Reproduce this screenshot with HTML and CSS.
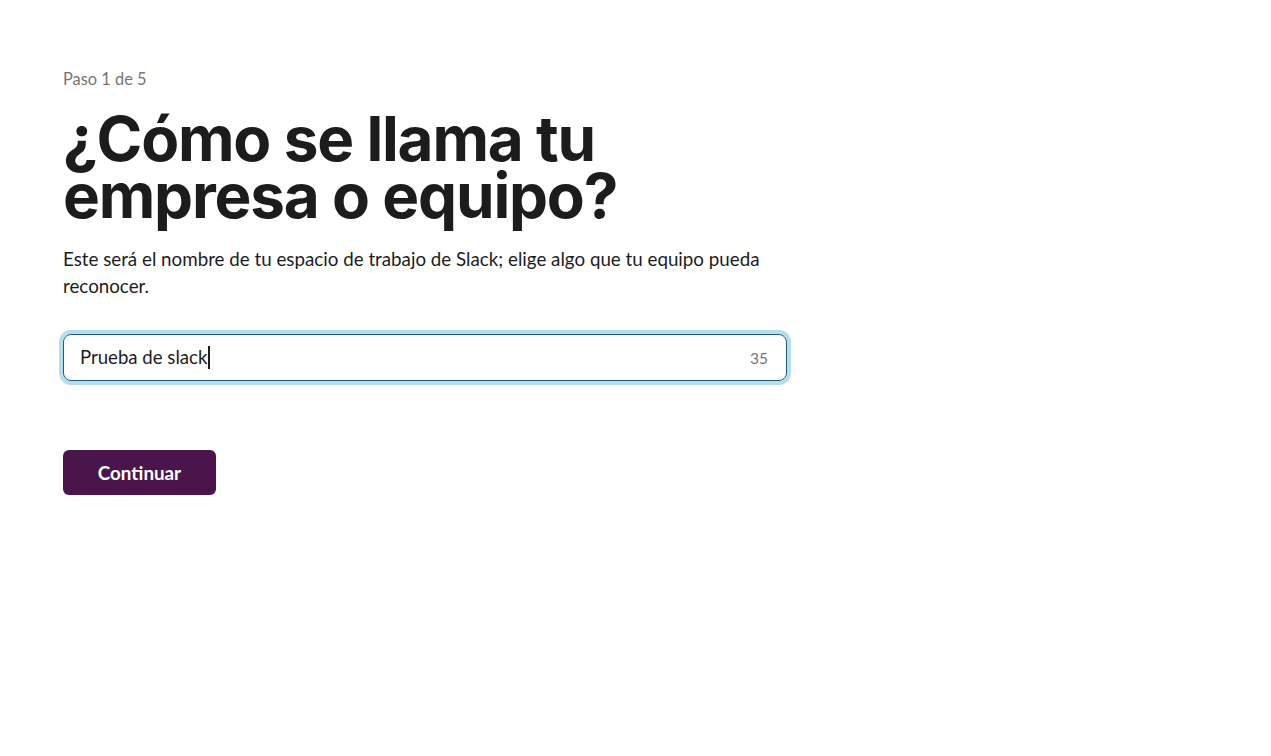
FILE: index.html
```html
<!DOCTYPE html>
<html lang="es">
<head>
<meta charset="utf-8">
<title>Slack</title>
<link rel="stylesheet" href="styles.css">
</head>
<body>
<main class="page">
  <div class="step">Paso 1 de 5</div>
  <h1 class="title">¿Cómo se llama tu empresa o equipo?</h1>
  <p class="desc">Este será el nombre de tu espacio de trabajo de Slack; elige algo que tu equipo pueda reconocer.</p>
  <div class="field">
    <span class="value">Prueba de slack</span><span class="caret"></span>
    <span class="count">35</span>
  </div>
  <button class="btn">Continuar</button>
</main>
</body>
</html>
```

FILE: styles.css
```css
* { box-sizing: border-box; }
body {
  margin: 0;
  background: #fff;
  font-family: Lato, "Noto Sans", sans-serif;
  color: #1d1c1d;
}
.page {
  padding: 68px 0 0 63px;
  width: 790px;
  display: flex;
  flex-direction: column;
  align-items: flex-start;
}
.step {
  font-size: 16.4px;
  line-height: 22px;
  color: #767476;
}
.title {
  margin: 20px 0 0 0;
  width: 600px;
  font-family: Inter, "Liberation Sans", sans-serif;
  font-weight: 700;
  font-size: 62px;
  line-height: 57px;
  letter-spacing: -1.2px;
  color: #1d1c1d;
}
.desc {
  margin: 21px 0 0 0;
  width: 724px;
  font-size: 18.75px;
  line-height: 27px;
}
.field {
  margin-top: 35px;
  width: 724px;
  height: 47px;
  border: 1px solid #1d5a7c;
  border-radius: 8px;
  box-shadow: 0 0 0 4px #b7dcec;
  display: flex;
  align-items: center;
  padding: 0 18px 0 16px;
  font-size: 18.6px;
}
.value { color: #1d1c1d; position: relative; top: -1px; }
.caret {
  width: 1.5px;
  height: 23px;
  background: #1d1c1d;
  margin-left: 1px;
}
.count {
  margin-left: auto;
  font-size: 15.5px;
  color: #767476;
}
.btn {
  margin-top: 69px;
  width: 153px;
  height: 45px;
  border: none;
  border-radius: 6px;
  background: #4a154b;
  color: #fff;
  font-family: Lato, sans-serif;
  font-weight: 700;
  font-size: 18.8px;
  cursor: pointer;
}
```
